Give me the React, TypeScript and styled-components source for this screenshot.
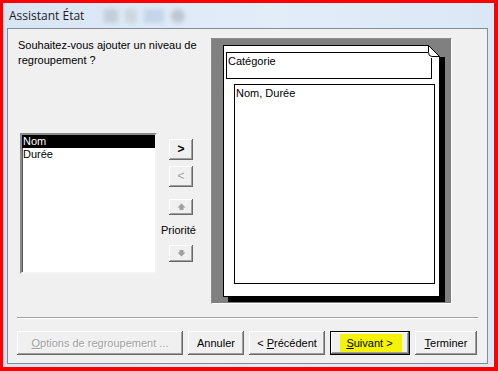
import React from 'react';
import styled, { createGlobalStyle } from 'styled-components';

const Global = createGlobalStyle`
  html, body { margin: 0; padding: 0; background: #fff; }
  body { width: 498px; height: 371px; overflow: hidden; }
  #root { width: 498px; height: 371px; }
`;

const uiFont = `"Liberation Sans", Arial, sans-serif`;

const Window = styled.div`
  box-sizing: border-box;
  width: 498px;
  height: 371px;
  border-style: solid;
  border-color: #ff0000;
  border-width: 3px 4px 4px 3px;
  background: linear-gradient(90deg, #d8e5f3 0%, #e3edf8 55%, #dae7f5 100%);
  display: flex;
  flex-direction: column;
`;

const TitleBar = styled.div`
  height: 25px;
  flex: none;
  display: flex;
  align-items: center;
  padding-left: 6px;
  gap: 20px;
`;

const TitleText = styled.span`
  font-family: "Open Sans", "Noto Sans", sans-serif;
  font-size: 12px;
  color: #1b1b1b;
`;

const Ghosts = styled.div`
  display: flex;
  align-items: center;
  gap: 7px;
  filter: blur(2px);
  opacity: 0.4;
`;

const Ghost = styled.span<{ $w: number; $c: string; $round?: boolean }>`
  display: block;
  width: ${(p) => p.$w}px;
  height: 14px;
  background: ${(p) => p.$c};
  border-radius: ${(p) => (p.$round ? '50%' : '2px')};
`;

const Client = styled.div`
  flex: 1;
  margin: 0 6px 3px 4px;
  background: #f0f0f0;
  border: 1px solid #7e8c9b;
  display: flex;
  flex-direction: column;
  font-family: ${uiFont};
  font-size: 11px;
  color: #000;
`;

const Main = styled.div`
  display: grid;
  grid-template-columns: 203px 241px;
  padding-top: 9px;
`;

const LeftCol = styled.div`
  padding-left: 10px;
  display: flex;
  flex-direction: column;
`;

const Question = styled.div`
  line-height: 15px;
  width: 190px;
`;

const ListRow = styled.div`
  display: flex;
  align-items: flex-start;
  margin-top: 65px;
  margin-left: 2px;
`;

const ListBox = styled.div`
  box-sizing: border-box;
  width: 137px;
  height: 141px;
  background: #fff;
  border: 2px solid;
  border-color: #8a8a8a #f4f4f4 #f4f4f4 #8a8a8a;
  box-shadow: inset 1px 1px 0 #5a5a5a;
  display: flex;
  flex-direction: column;
`;

const ListItem = styled.div<{ $selected?: boolean }>`
  height: 13px;
  line-height: 13px;
  padding-left: 1px;
  background: ${(p) => (p.$selected ? '#000' : 'transparent')};
  color: ${(p) => (p.$selected ? '#fff' : '#000')};
`;

const SideCol = styled.div`
  width: 34px;
  margin-left: 4px;
  display: flex;
  flex-direction: column;
  align-items: flex-start;
`;

const raised = `
  background: #f0f0f0;
  box-shadow: inset -1px -1px 0 #696969, inset 1px 1px 0 #ffffff, inset -2px -2px 0 #a0a0a0;
`;

const SmallButton = styled.div<{ $h: number; $mt: number; $disabled?: boolean }>`
  ${raised}
  box-sizing: border-box;
  width: 24px;
  height: ${(p) => p.$h}px;
  margin-top: ${(p) => p.$mt}px;
  margin-left: 8px;
  display: flex;
  align-items: center;
  justify-content: center;
  font-size: 12px;
  font-weight: ${(p) => (p.$disabled ? 400 : 700)};
  color: ${(p) => (p.$disabled ? '#a0a0a0' : '#000')};
  text-shadow: ${(p) => (p.$disabled ? '1px 1px 0 #fff' : 'none')};
  padding-bottom: 1px;
`;

const PriorityLabel = styled.div`
  margin-top: 8px;
  line-height: 14px;
`;

const Preview = styled.div`
  box-sizing: border-box;
  width: 241px;
  height: 266px;
  background: #808080;
  border: 1px solid;
  border-color: #8c8c8c #ffffff #ffffff #8c8c8c;
  padding: 6px 0 0 11px;
`;

const Page = styled.div`
  position: relative;
  box-sizing: border-box;
  width: 217px;
  height: 252px;
  background: #fff;
  border: 1px solid #000;
  box-shadow: 5px 5px 0 #000;
  padding: 6px 0 0 2px;
  display: flex;
  flex-direction: column;
  align-items: flex-start;
`;

const DogEar = styled.svg`
  position: absolute;
  top: -1px;
  left: 204px;
  width: 18px;
  height: 13px;
`;

const GroupHeader = styled.div`
  box-sizing: border-box;
  width: 206px;
  height: 27px;
  border: 1px solid #000;
  padding: 1px 0 0 1px;
  line-height: 14px;
`;

const DetailBox = styled.div`
  box-sizing: border-box;
  width: 201px;
  height: 200px;
  margin: 5px 0 0 8px;
  border: 1px solid #000;
  padding: 1px 0 0 1px;
  line-height: 14px;
`;

const Separator = styled.div`
  margin: 13px 9px 0 9px;
  height: 1px;
  background: #a0a0a0;
  border-bottom: 1px solid #ffffff;
  width: 461px;
`;

const ButtonBar = styled.div`
  display: flex;
  gap: 5px;
  margin-top: 12px;
  padding-left: 9px;
`;

const Button = styled.div<{ $w: number; $disabled?: boolean; $default?: boolean }>`
  ${raised}
  box-sizing: border-box;
  width: ${(p) => p.$w}px;
  height: 24px;
  display: flex;
  align-items: center;
  justify-content: center;
  color: ${(p) => (p.$disabled ? '#a0a0a0' : '#000')};
  text-shadow: ${(p) => (p.$disabled ? '1px 1px 0 #fff' : 'none')};
  ${(p) =>
    p.$default
      ? `box-shadow: inset 0 0 0 1px #000, inset -2px -2px 0 #696969, inset 2px 2px 0 #ffffff, inset -3px -3px 0 #a0a0a0;`
      : ''}
`;

const Mnemonic = styled.span`
  text-decoration: underline;
  text-underline-offset: 1px;
`;

const Highlight = styled.span`
  background: #f4f400;
  padding: 3px 9px 3px 6px;
  margin-left: 2px;
`;

const Arrow = ({ down }: { down?: boolean }) => (
  <svg width="11" height="9" viewBox="0 0 11 9" style={{ transform: down ? 'rotate(180deg)' : undefined }}>
    <path d="M1.5 5.5 L5.5 1.5 L9.5 5.5 L7.5 5.5 L7.5 8 L3.5 8 L3.5 5.5 Z" fill="#a0a0a0" />
  </svg>
);

export default function App() {
  return (
    <>
      <Global />
      <Window>
        <TitleBar>
          <TitleText>Assistant État</TitleText>
          <Ghosts>
            <Ghost $w={14} $c="#9aa6b4" />
            <Ghost $w={12} $c="#b3bcc6" />
            <Ghost $w={20} $c="#9fb6d6" />
            <Ghost $w={14} $c="#8f969e" $round />
          </Ghosts>
        </TitleBar>
        <Client>
          <Main>
            <LeftCol>
              <Question>Souhaitez-vous ajouter un niveau de regroupement ?</Question>
              <ListRow>
                <ListBox>
                  <ListItem $selected>Nom</ListItem>
                  <ListItem>Durée</ListItem>
                </ListBox>
                <SideCol>
                  <SmallButton $h={21} $mt={6}>&gt;</SmallButton>
                  <SmallButton $h={21} $mt={6} $disabled>&lt;</SmallButton>
                  <SmallButton $h={16} $mt={12}><Arrow /></SmallButton>
                  <PriorityLabel>Priorité</PriorityLabel>
                  <SmallButton $h={17} $mt={8}><Arrow down /></SmallButton>
                </SideCol>
              </ListRow>
            </LeftCol>
            <Preview>
              <Page>
                <DogEar viewBox="0 0 18 13">
                  <rect x="0" y="0" width="18" height="13" fill="#808080" />
                  <path d="M0 0.5 L11.5 12 L11.5 13 L0 13 Z" fill="#ffffff" />
                  <path d="M0.5 0.5 L11.5 11.5 L4 11.5 Q0.5 11.5 0.5 7.5 Z" fill="#ffffff" stroke="#000" strokeWidth="1" />
                  <path d="M0 0.5 L0.5 0.5" stroke="#000" strokeWidth="1" />
                  <path d="M11.5 11.5 L11.5 13" stroke="#000" strokeWidth="1" />
                  <rect x="12" y="12" width="5" height="1" fill="#000" />
                </DogEar>
                <GroupHeader>Catégorie</GroupHeader>
                <DetailBox>Nom, Durée</DetailBox>
              </Page>
            </Preview>
          </Main>
          <Separator />
          <ButtonBar>
            <Button $w={166} $disabled>
              <span><Mnemonic>O</Mnemonic>ptions de regroupement ...</span>
            </Button>
            <Button $w={56}>Annuler</Button>
            <Button $w={76}>
              <span>&lt; <Mnemonic>P</Mnemonic>récédent</span>
            </Button>
            <Button $w={80} $default>
              <Highlight><Mnemonic>S</Mnemonic>uivant &gt;</Highlight>
            </Button>
            <Button $w={62}>
              <span><Mnemonic>T</Mnemonic>erminer</span>
            </Button>
          </ButtonBar>
        </Client>
      </Window>
    </>
  );
}
